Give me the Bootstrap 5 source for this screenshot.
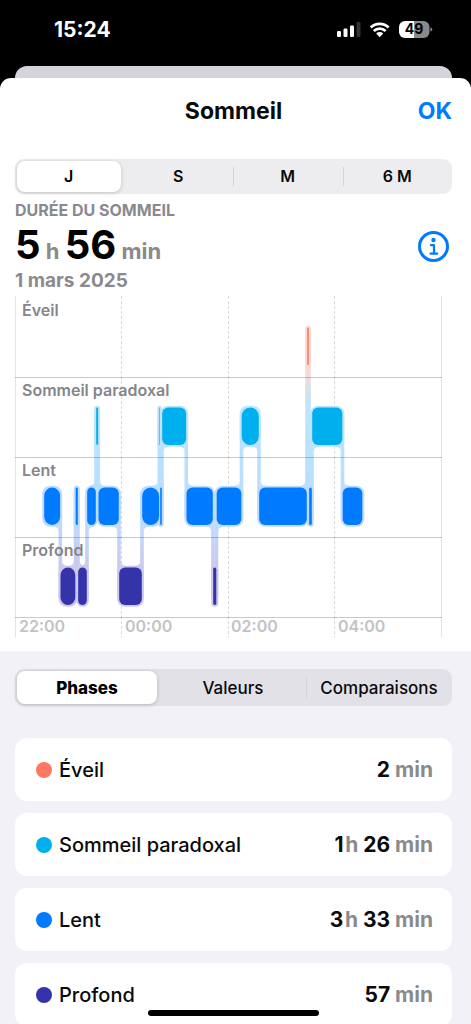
<!DOCTYPE html>
<html lang="fr">
<head>
<meta charset="utf-8">
<meta name="viewport" content="width=device-width, initial-scale=1">
<title>Sommeil</title>
<link href="https://cdn.jsdelivr.net/npm/bootstrap@5.3.0/dist/css/bootstrap.min.css" rel="stylesheet">
<style>
  body { background: #000; color: #0a0a0b; font-family: Inter, "Open Sans", sans-serif; }
  .status { height: 66px; padding: 18px 38px 0 54px; color: #fff; }
  .clock { font-size: 21px; line-height: 24px; font-weight: 700; }
  .under-sheet { height: 12px; margin: 0 19px 0 15px; background: #d5d4da; border-radius: 12px 12px 0 0; }
  .sheet { background: #f2f1f7; border-radius: 11px 11px 0 0; min-height: 0; overflow-y: auto; scrollbar-width: none; }
  .sheet::-webkit-scrollbar { display: none; }
  .gutter { padding-left: 15px; padding-right: 19px; }
  .top-part { background: #fff; padding-bottom: 14px; }
  .title-bar { display: grid; grid-template-columns: 1fr auto 1fr; height: 66px; align-items: center; }
  .title-bar h1 { font-size: 23px; line-height: 28px; font-weight: 700; }
  .title-bar button { font-size: 23px; line-height: 28px; font-weight: 700; color: #007aff; }
  .segments { background: #ededef; border-radius: 9px; height: 35px; margin-top: 15px; }
  .segments .btn { flex: 1 1 0; height: 31px; margin: 2px 3px 2px 2px; padding: 0; border: 0; border-radius: 8px !important; font-size: 16px; line-height: 31px; font-weight: 600; color: #0a0a0b; white-space: nowrap; }
  .segments .btn-check:checked + .btn { background: #fff; color: #000; box-shadow: 0 1px 4px #00000030; }
  .segments .rule { width: 1px; margin: 8px 0; background: #d3d3d8; }
  .segments .rule.hidden-rule { background: transparent; }
  .segments-lg { background: #e2e1e7; height: 37px; margin-top: 0; }
  .segments-lg .btn { height: 33px; line-height: 34px; font-size: 17px; font-weight: 500; }
  .segments-lg .btn-check:checked + .btn { font-weight: 800; }
  .summary { padding-top: 6px; }
  .caption { font-size: 16px; line-height: 20px; font-weight: 700; color: #8a8a8e; }
  .total { font-size: 40px; line-height: 50px; font-weight: 700; color: #000; }
  .total small { font-size: 22px; line-height: 24px; font-weight: 700; color: #8a8a8e; }
  .day { font-size: 19px; line-height: 22px; font-weight: 700; color: #8a8a8e; }
  .info { margin-right: 3px; }
  .chart { display: block; width: 100%; height: auto; margin-top: 4px; font-weight: 600; font-size: 16px; }
  .chart .stage { fill: #85858a; }
  .chart .hour { fill: #c3c3c6; }
  .lower-part { padding-top: 18px; }
  .phases { margin: 32px 0 0; padding: 0; gap: 12px; }
  .phase { height: 63px; padding: 0 19px 0 21px; background: #fff; border-radius: 12px; font-size: 20px; line-height: 24px; }
  .phase .dot { width: 16px; height: 16px; margin-right: 7px; border-radius: 50%; }
  .phase .time { font-size: 21px; font-weight: 700; }
  .phase .time span { color: #8a8a8e; }
  .phase .label { font-weight: 500; }
  .home-bar { bottom: 8px; left: 0; right: 0; pointer-events: none; }
  .home-bar div { width: 39%; height: 6px; border-radius: 3px; background: #000; }
</style>
</head>
<body>
<div class="vh-100 d-flex flex-column overflow-hidden">
  <header class="status d-flex justify-content-between flex-shrink-0">
    <span class="clock">15:24</span>
    <span class="d-flex align-items-start">
      <svg width="98" height="24" viewBox="335 18 98 24" aria-label="Réseau, Wi-Fi, batterie 49 %">
        <g fill="#fff">
          <rect x="337" y="31" width="4" height="6" rx="1.3"/>
          <rect x="343.5" y="28.500" width="4" height="8.500" rx="1.3"/>
          <rect x="350" y="25.500" width="4" height="11.500" rx="1.3"/>
          <rect x="356.500" y="22" width="4" height="15" rx="1.300" fill="#333"/>
        </g>
        <path d="M370.800 27.500a12.800 12.800 0 0 1 17.800 0M373.800 31a8.400 8.400 0 0 1 11.800 0" fill="none" stroke="#fff" stroke-width="2.800"/>
        <path d="M376.200 33.400a5 5 0 0 1 7 0l-3.500 3.800z" fill="#fff"/>
        <path d="M414 21h9.500a6 6 0 0 1 6 6v5a6 6 0 0 1-6 6H414z" fill="#8a8a8a"/>
        <path d="M414 21h-9a6 6 0 0 0-6 6v5a6 6 0 0 0 6 6h9z" fill="#fff"/>
        <path d="M430.500 27.200q1.800.8 1.800 2.300t-1.800 2.300z" fill="#8a8a8a"/>
        <text x="414" y="34.300" text-anchor="middle" font-size="14" font-weight="700" fill="#000">49</text>
      </svg>
    </span>
  </header>
  <div class="under-sheet flex-shrink-0"></div>
  <main class="sheet flex-grow-1">
    <section class="top-part gutter">
      <div class="title-bar">
        <span></span>
        <h1 class="m-0">Sommeil</h1>
        <button type="button" class="btn p-0 border-0 ms-auto">OK</button>
      </div>
      <div class="segments d-flex" role="group" aria-label="Période">
        <input class="btn-check" type="radio" name="period" id="p-day" checked><label class="btn" for="p-day">J</label>
        <span class="rule hidden-rule"></span>
        <input class="btn-check" type="radio" name="period" id="p-week"><label class="btn" for="p-week">S</label>
        <span class="rule"></span>
        <input class="btn-check" type="radio" name="period" id="p-month"><label class="btn" for="p-month">M</label>
        <span class="rule"></span>
        <input class="btn-check" type="radio" name="period" id="p-half"><label class="btn" for="p-half">6 M</label>
      </div>
      <div class="summary d-flex justify-content-between align-items-center">
        <div>
          <div class="caption">DURÉE DU SOMMEIL</div>
          <div class="total">5<small> h </small>56<small> min</small></div>
          <div class="day">1 mars 2025</div>
        </div>
        <button type="button" class="info btn p-0 border-0" aria-label="Informations">
          <svg class="d-block" width="31" height="31" viewBox="0 0 31 31" fill="none" stroke="#007aff">
            <circle cx="15.500" cy="15.500" r="14" stroke-width="3"/>
            <circle cx="15.500" cy="9" r="2.200" fill="#007aff" stroke="none"/>
            <path d="M13 14.200h3v8.200M12.500 22.600h6.800" stroke-width="2.200" stroke-linecap="round" stroke-linejoin="round"/>
          </svg>
        </button>
      </div>
      <svg class="chart" viewBox="0 0 437 341" role="img" aria-label="Phases de sommeil">
        <defs>
          <linearGradient id="halo" gradientUnits="userSpaceOnUse" x1="0" y1="0" x2="0" y2="320">
            <stop offset=".22" stop-color="#ffd8d2"/>
            <stop offset=".34" stop-color="#bde6fb"/>
            <stop offset=".6" stop-color="#b9deff"/>
            <stop offset=".71" stop-color="#bedbfd"/>
            <stop offset=".85" stop-color="#cbc9ec"/>
          </linearGradient>
        </defs>
        <g stroke="#dadadc" stroke-dasharray="3 2">
          <path d="M106.500 0V341M213.500 0V341M319.500 0V341"/>
        </g>
        <path d="M.5 0V341M426.500 0V341" stroke="#e4e4e6"/>
        <g id="halos" fill="url(#halo)"></g>
        <path d="M0 81.500H427M0 161.500H427M0 241.500H427M0 321.500H427" stroke="#3c3c43" stroke-opacity=".28"/>
        <g class="stage">
          <text x="7" y="20">Éveil</text>
          <text x="7" y="100">Sommeil paradoxal</text>
          <text x="7" y="180">Lent</text>
          <text x="7" y="260">Profond</text>
        </g>
        <g class="hour">
          <text x="4" y="336">22:00</text>
          <text x="110" y="336">00:00</text>
          <text x="216" y="336">02:00</text>
          <text x="323" y="336">04:00</text>
        </g>
        <g id="bars"></g>
      </svg>
    </section>
    <section class="lower-part gutter">
      <div class="segments segments-lg d-flex" role="group" aria-label="Vue">
        <input class="btn-check" type="radio" name="view" id="v-phases" checked><label class="btn" for="v-phases">Phases</label>
        <span class="rule hidden-rule"></span>
        <input class="btn-check" type="radio" name="view" id="v-values"><label class="btn" for="v-values">Valeurs</label>
        <span class="rule"></span>
        <input class="btn-check" type="radio" name="view" id="v-compare"><label class="btn" for="v-compare">Comparaisons</label>
      </div>
      <ul class="phases list-unstyled d-flex flex-column">
        <li class="phase d-flex align-items-center"><span class="dot" style="background:#ff7863"></span><span class="label me-auto">Éveil</span><span class="time">2<span> min</span></span></li>
        <li class="phase d-flex align-items-center"><span class="dot" style="background:#00b0ee"></span><span class="label me-auto">Sommeil paradoxal</span><span class="time">1<span>&#8202;h</span> 26<span> min</span></span></li>
        <li class="phase d-flex align-items-center"><span class="dot" style="background:#007aff"></span><span class="label me-auto">Lent</span><span class="time">3<span>&#8202;h</span> 33<span> min</span></span></li>
        <li class="phase d-flex align-items-center"><span class="dot" style="background:#3533a9"></span><span class="label me-auto">Profond</span><span class="time">57<span> min</span></span></li>
      </ul>
    </section>
  </main>
</div>
<div class="home-bar gutter position-fixed d-flex justify-content-center"><div></div></div>
<script src="https://cdn.jsdelivr.net/npm/bootstrap@5.3.0/dist/js/bootstrap.bundle.min.js"></script>
<script>
  // Night timeline: stage row (0 awake, 1 REM, 2 core, 3 deep), start, end.
  const night = [
    [2, 29, 45.3], [3, 45.3, 60.5], [2, 60.5, 63], [3, 63, 72], [2, 72, 81], [1, 81, 83.3],
    [2, 83.3, 104], [3, 104, 127], [2, 127, 144.3], [1, 144, 145], [2, 145, 147], [1, 147, 171.3],
    [2, 171.3, 198], [3, 198, 201.5], [2, 201.5, 226.5], [1, 226.5, 244], [2, 244, 292],
    [0, 292, 294], [2, 294, 297], [1, 297, 327.5], [2, 327.5, 347.5]
  ];
  const colors = ['#ff7863', '#00b0ee', '#007aff', '#3533a9'];
  const top0 = 31.5, step = 80, barH = 37.5, pad = 1.8, f = 5;
  const radius = w => w < 18 ? w / 2 : 6;
  let halos = '', bars = '';
  night.forEach(([row, a, b], i) => {
    const y = top0 + row * step, r = radius(b - a);
    halos += `<rect x="${a - pad}" y="${y - pad}" width="${b - a + 2 * pad}" height="${barH + 2 * pad}" rx="${Math.min(r + pad, 8)}"/>`;
    bars += `<rect x="${a + .2}" y="${y}" width="${b - a - .4}" height="${barH}" rx="${r}" fill="${colors[row]}"/>`;
    const next = night[i + 1];
    if (!next) return;
    const down = next[0] > row, hi = Math.min(row, next[0]), lo = Math.max(row, next[0]);
    const yHi = top0 + hi * step, yLo = top0 + lo * step, s = down ? 1 : -1;
    halos += `<rect x="${b - pad}" y="${yHi + 8}" width="${2 * pad}" height="${yLo - yHi + barH - 16}"/>`;
    const wHi = down ? b - a : next[2] - next[1], wLo = down ? next[2] - next[1] : b - a;
    const xu = b - s * pad, xl = b + s * pad, yu = yHi + barH + pad, yl = yLo - pad;
    if (wHi > 8) halos += `<path d="M${xu - s * f} ${yu - 1}V${yu}Q${xu} ${yu} ${xu} ${yu + f}V${yu - 6}Z"/>`;
    if (wLo > 8) halos += `<path d="M${xl + s * f} ${yl + 1}V${yl}Q${xl} ${yl} ${xl} ${yl - f}V${yl + 6}Z"/>`;
  });
  document.getElementById('halos').innerHTML = halos;
  document.getElementById('bars').innerHTML = bars;
</script>
</body>
</html>
